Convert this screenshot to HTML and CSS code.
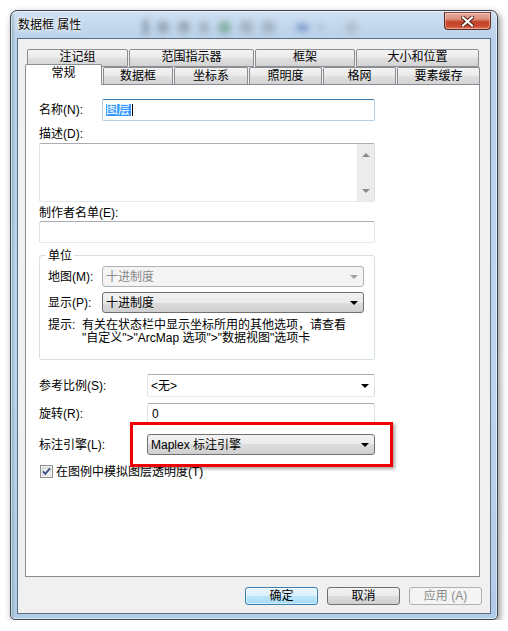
FILE: index.html
```html
<!DOCTYPE html>
<html lang="zh-CN">
<head>
    <meta charset="UTF-8">
    <title>数据框 属性</title>
    <link rel="stylesheet" href="styles.css">
</head>
<body>
    <div class="window">
        <div class="titlebar">
            <span class="title">数据框 属性</span>
            <div class="blur-icons">
                <span class="blob b-bar"></span>
                <span class="blob b-lens"></span>
                <span class="blob b-lens"></span>
                <span class="blob b-hand"></span>
                <span class="blob b-globe"></span>
                <span class="blob b-grid"></span>
                <span class="blob b-grid"></span>
                <span class="blob b-arrow"></span>
                <span class="blob b-small"></span>
                <span class="blob b-round"></span>
            </div>
            <div class="close-btn">
                <svg width="13" height="11" viewBox="0 0 13 11">
                    <path d="M2 1.5 L11 9.5 M11 1.5 L2 9.5" stroke="#4a1a14" stroke-width="4" stroke-linecap="square"/>
                    <path d="M2 1.5 L11 9.5 M11 1.5 L2 9.5" stroke="#fff" stroke-width="2.2" stroke-linecap="square"/>
                </svg>
            </div>
        </div>

        <div class="client">
            <div class="tabs-back">
                <div class="tab tb1">注记组</div>
                <div class="tab tb2">范围指示器</div>
                <div class="tab tb3">框架</div>
                <div class="tab tb4">大小和位置</div>
            </div>
            <div class="tabs-front">
                <div class="tab active tf1">常规</div>
                <div class="tab tf2">数据框</div>
                <div class="tab tf3">坐标系</div>
                <div class="tab tf4">照明度</div>
                <div class="tab tf5">格网</div>
                <div class="tab tf6">要素缓存</div>
            </div>

            <div class="panel">
                <div class="row row-name">
                    <span class="label lbl-short">名称(N):</span>
                    <div class="textbox focus"><span class="sel">图层</span><span class="caret"></span></div>
                </div>

                <div class="caption cap-desc">描述(D):</div>
                <div class="memo">
                    <div class="vscroll">
                        <span class="tri up"></span>
                        <span class="tri down"></span>
                    </div>
                </div>

                <div class="caption cap-credits">制作者名单(E):</div>
                <div class="textbox wide"></div>

                <div class="group">
                    <div class="legend">单位</div>
                    <div class="row row-map">
                        <span class="label lbl-unit">地图(M):</span>
                        <div class="combo disabled"><span>十进制度</span><span class="arrow"></span></div>
                    </div>
                    <div class="row row-display">
                        <span class="label lbl-unit">显示(P):</span>
                        <div class="combo button-style"><span>十进制度</span><span class="arrow"></span></div>
                    </div>
                    <div class="hint">
                        <span class="hint-label">提示:</span>
                        <div class="hint-text">
                            <div>有关在状态栏中显示坐标所用的其他选项，请查看</div>
                            <div>"自定义"&gt;"ArcMap 选项"&gt;"数据视图"选项卡</div>
                        </div>
                    </div>
                </div>

                <div class="row row-scale">
                    <span class="label lbl-long">参考比例(S):</span>
                    <div class="combo editable"><span>&lt;无&gt;</span><span class="arrow"></span></div>
                </div>
                <div class="row row-rotate">
                    <span class="label lbl-long">旋转(R):</span>
                    <div class="textbox"><span class="value">0</span></div>
                </div>
                <div class="row row-engine">
                    <span class="label lbl-long">标注引擎(L):</span>
                    <div class="combo button-style"><span>Maplex 标注引擎</span><span class="arrow"></span></div>
                </div>
                <div class="row row-check">
                    <svg class="check" width="13" height="13" viewBox="0 0 13 13">
                        <defs>
                            <linearGradient id="cb" x1="0" y1="0" x2="1" y2="1">
                                <stop offset="0" stop-color="#dcdcdc"/>
                                <stop offset="1" stop-color="#fbfbfb"/>
                            </linearGradient>
                        </defs>
                        <rect x="0.5" y="0.5" width="12" height="12" fill="#fff" stroke="#8e8f8f"/>
                        <rect x="2" y="2" width="9" height="9" fill="url(#cb)" stroke="#c5c7c9" stroke-width="0.6"/>
                        <path d="M3 6.3 L5.3 8.8 L10 3.4" fill="none" stroke="#3a4f85" stroke-width="1.8"/>
                    </svg>
                    <span class="check-text">在图例中模拟图层透明度(T)</span>
                </div>

                <div class="highlight"></div>
            </div>

            <div class="buttons">
                <div class="btn default">确定</div>
                <div class="btn">取消</div>
                <div class="btn disabled">应用 (A)</div>
            </div>
        </div>
    </div>
</body>
</html>
```

FILE: styles.css
```css
body {
    margin: 0;
    background: #fff;
    font-family: "Liberation Sans", "Noto Sans CJK SC", sans-serif;
    font-size: 12px;
    line-height: 14px;
    color: #000;
}

/* window frame */

.window {
    box-sizing: border-box;
    width: 488px;
    height: 610px;
    margin: 10px 0 0 10px;
    padding: 0 6px 5px;
    border: 1px solid #3b4653;
    border-radius: 7px 7px 5px 5px;
    background: linear-gradient(to right, rgba(60, 100, 85, 0.35) 0, rgba(60, 100, 85, 0) 4px),
                linear-gradient(#cfe0f2, #b9d1ea 28px, #bcd4ed 60%, #b2cbe8);
    box-shadow: inset 0 0 0 1px rgba(255, 255, 255, 0.55), 2px 3px 7px rgba(0, 0, 0, 0.45);
    display: flex;
    flex-direction: column;
}

.titlebar {
    height: 27px;
    display: flex;
    align-items: flex-start;
}

.title {
    margin: 7px 0 0 1px;
    text-shadow: 0 0 5px #fff, 0 0 3px #fff, 0 0 1px #fff;
}

.blur-icons {
    flex: 1;
    display: flex;
    align-items: center;
    gap: 9px;
    height: 20px;
    margin-top: 6px;
    padding-left: 62px;
    filter: blur(3px);
    opacity: 0.55;
}

.blob {
    display: block;
    background: #7d8793;
    border-radius: 3px;
}

.b-bar { width: 5px; height: 16px; background: #56606c; }
.b-lens { width: 12px; height: 12px; border-radius: 50%; background: #6f7a86; }
.b-hand { width: 10px; height: 11px; background: #8a939e; }
.b-globe { width: 13px; height: 13px; border-radius: 50%; background: #4f8d63; }
.b-grid { width: 13px; height: 12px; background: #8c96a2; }
.b-arrow { width: 13px; height: 7px; margin-left: 12px; background: #3c63a8; }
.b-small { width: 6px; height: 6px; background: #8d97a3; }
.b-round { width: 13px; height: 13px; margin-left: 12px; border-radius: 50%; background: #a2aab3; }

.close-btn {
    box-sizing: border-box;
    width: 47px;
    height: 18px;
    margin: 1px 0 0 auto;
    border: 1px solid #5e2a22;
    border-top-color: #8a4a40;
    border-radius: 0 0 4px 4px;
    background: linear-gradient(#eab0a3, #db8b77 40%, #c4432a 55%, #c9492f 80%, #d9785e);
    box-shadow: inset 0 0 0 1px rgba(255, 220, 210, 0.45);
    display: flex;
    align-items: center;
    justify-content: center;
}

/* client area */

.client {
    flex: 1;
    display: flex;
    flex-direction: column;
    padding: 10px 10px 0 7px;
    border: 1px solid #5d6d80;
    background: #f0f0f0;
}

.tabs-back,
.tabs-front {
    display: flex;
    gap: 1px;
}

.tabs-back {
    height: 18px;
    margin-left: 2px;
}

.tabs-front {
    position: relative;
    z-index: 2;
    height: 20px;
    margin-top: -3px;
    align-items: flex-end;
}

.tab {
    box-sizing: border-box;
    border: 1px solid #8b8d93;
    border-radius: 2px 2px 0 0;
    background: linear-gradient(#f3f3f3, #ebebeb 45%, #dedede 55%, #d3d3d3);
    text-align: center;
    line-height: 15px;
}

.tabs-back .tab {
    height: 18px;
}

.tabs-front .tab {
    height: 17px;
    border-bottom: none;
    line-height: 17px;
}

.tabs-front .tab.active {
    height: 21px;
    margin-bottom: -1px;
    background: #fff;
    line-height: 17px;
}

.tb1 { width: 101px; }
.tb2 { width: 125px; }
.tb3 { width: 100px; }
.tb4 { width: 123px; }

.tf1 { width: 77px; }
.tf2 { width: 70px; }
.tf3 { width: 74px; }
.tf4 { width: 73px; }
.tf5 { width: 73px; }
.tf6 { width: 83px; }

.panel {
    position: relative;
    z-index: 1;
    box-sizing: border-box;
    height: 493px;
    padding: 14px 0 0 13px;
    border: 1px solid #898c95;
    background: #fff;
}

.panel > * {
    width: 336px;
}

.row {
    display: flex;
    align-items: center;
}

.label {
    flex: none;
}

.lbl-short { width: 63px; }
.lbl-unit { width: 54px; }
.lbl-long { width: 108px; }

.row-name { height: 22px; }

.textbox {
    box-sizing: border-box;
    flex: 1;
    height: 22px;
    display: flex;
    align-items: center;
    padding-left: 3px;
    border: 1px solid;
    border-color: #abadb3 #dbdfe6 #e3e9ef #e2e3ea;
    border-radius: 2px;
    background: #fff;
}

.textbox.focus {
    border-color: #3d7bad #b5cfe7 #b5cfe7 #b5cfe7;
}

.textbox.wide {
    margin-top: 1px;
}

.sel {
    background: #3399ff;
    color: #fff;
    line-height: 12px;
    padding-right: 1px;
}

.caret {
    width: 1px;
    height: 12px;
    margin-left: 1px;
    background: #000;
}

.value {
    padding-left: 1px;
}

.caption {
    height: 14px;
}

.cap-desc { margin-top: 6px; }
.cap-credits { margin-top: 4px; }

.memo {
    box-sizing: border-box;
    height: 59px;
    margin-top: 2px;
    display: flex;
    justify-content: flex-end;
    border: 1px solid;
    border-color: #abadb3 #dbdfe6 #e3e9ef #e2e3ea;
    border-radius: 2px;
}

.vscroll {
    width: 16px;
    display: flex;
    flex-direction: column;
    justify-content: space-between;
    align-items: center;
    padding: 9px 0 8px;
    border-left: 1px solid #e6e6e6;
    background: #ececec;
}

.tri {
    width: 0;
    height: 0;
    border-left: 4px solid transparent;
    border-right: 4px solid transparent;
}

.tri.up { border-bottom: 4px solid #8a8a8a; }
.tri.down { border-top: 4px solid #8a8a8a; }

/* units group */

.group {
    box-sizing: border-box;
    margin-top: 12px;
    padding: 0 10px 14px 8px;
    border: 1px solid #d5dfe5;
    border-radius: 3px;
}

.legend {
    width: fit-content;
    margin: -7px 0 0 -2px;
    padding: 0 2px;
    background: #fff;
}

.row-map { margin-top: 3px; }
.row-display { margin-top: 5px; }

.combo {
    box-sizing: border-box;
    flex: 1;
    height: 21px;
    display: flex;
    align-items: center;
    justify-content: space-between;
    padding: 0 5px 0 3px;
    border-radius: 3px;
}

.combo.button-style {
    border: 1px solid #707070;
    background: linear-gradient(#f2f2f2, #ebebeb 50%, #dddddd 50%, #cfcfcf);
}

.combo.disabled {
    border: 1px solid #adb2b5;
    background: #f4f4f4;
    color: #8a8a8a;
}

.combo.editable {
    height: 23px;
    border: 1px solid;
    border-color: #abadb3 #dbdfe6 #e3e9ef #e2e3ea;
    border-radius: 2px;
    background: #fff;
}

.arrow {
    width: 0;
    height: 0;
    border-left: 4px solid transparent;
    border-right: 4px solid transparent;
    border-top: 4px solid #000;
}

.disabled .arrow {
    border-top-color: #a0a0a0;
}

.hint {
    display: flex;
    margin-top: 6px;
    line-height: 13px;
}

.hint-label {
    width: 34px;
    flex: none;
}

/* lower fields */

.row-scale { margin-top: 14px; height: 23px; }
.row-rotate { margin-top: 6px; height: 22px; }
.row-engine { margin-top: 9px; height: 21px; }
.row-check { margin-top: 10px; height: 13px; }

.check {
    flex: none;
    margin-left: 1px;
}

.check-text {
    margin-left: 3px;
}

.highlight {
    position: absolute;
    left: 104px;
    top: 337px;
    box-sizing: border-box;
    width: 263px !important;
    height: 45px;
    border: 3px solid #f00000;
    box-shadow: 2px 2px 3px rgba(0, 0, 0, 0.35);
}

/* dialog buttons */

.buttons {
    display: flex;
    justify-content: flex-end;
    gap: 9px;
    margin: 10px -2px 0 0;
}

.btn {
    box-sizing: border-box;
    width: 73px;
    height: 18px;
    border: 1px solid #707070;
    border-radius: 3px;
    background: linear-gradient(#f2f2f2, #ebebeb 50%, #dddddd 50%, #cfcfcf);
    text-align: center;
    line-height: 16px;
}

.btn.default {
    border-color: #3c7fb1;
    background: linear-gradient(#eaf6fd, #d9f0fc 50%, #bee6fd 50%, #a7d9f5);
    box-shadow: inset 0 0 0 1px rgba(255, 255, 255, 0.5);
}

.btn.disabled {
    border-color: #adb2b5;
    background: #f4f4f4;
    color: #8a8a8a;
}
```
